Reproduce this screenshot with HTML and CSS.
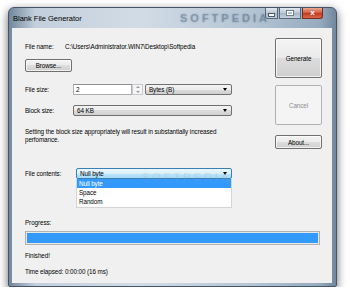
FILE: index.html
```html
<!DOCTYPE html>
<html lang="en">
<head>
    <meta charset="UTF-8">
    <title>Blank File Generator</title>
    <link rel="stylesheet" href="styles.css">
</head>
<body>
    <div class="window">
        <div class="titlebar">
            <span class="title">Blank File Generator</span>
            <span class="watermark">SOFTPEDIA</span>
            <div class="caption-buttons">
                <span class="cap cap-min"><i></i></span>
                <span class="cap cap-max"><i></i></span>
                <span class="cap cap-close">x</span>
            </div>
        </div>
        <div class="client">
            <div class="top">
                <div class="form">
                    <div class="row row-name">
                        <span class="label label-short">File name:</span>
                        <span class="path">C:\Users\Administrator.WIN7\Desktop\Softpedia</span>
                    </div>
                    <button class="btn btn-browse">Browse...</button>
                    <div class="row row-size">
                        <span class="label">File size:</span>
                        <div class="textbox">2</div>
                        <div class="spinner"><span class="up"></span><span class="down"></span></div>
                        <div class="combo combo-unit">Bytes (B)<span class="arrow"></span></div>
                    </div>
                    <div class="row row-block">
                        <span class="label">Block size:</span>
                        <div class="combo combo-wide">64 KB<span class="arrow"></span></div>
                    </div>
                    <p class="note">Setting the block size appropriately will result in substantially increased<br>perfomance.</p>
                    <div class="row row-contents">
                        <span class="label label-long">File contents:</span>
                        <div class="combo combo-focus">Null byte<span class="arrow"></span></div>
                    </div>
                </div>
                <div class="actions">
                    <button class="btn btn-big">Generate</button>
                    <button class="btn btn-big btn-disabled">Cancel</button>
                    <button class="btn btn-about">About...</button>
                </div>
            </div>
            <div class="bottom">
                <div class="line">Progress:</div>
                <div class="progress"><div class="progress-fill"></div></div>
                <div class="line line-finished">Finished!</div>
                <div class="line line-time">Time elapsed: 0:00:00 (16 ms)</div>
            </div>
            <ul class="dropdown">
                <li class="selected">Null byte</li>
                <li>Space</li>
                <li>Random</li>
            </ul>
            <span class="wm-mid">SOFTPEDIA</span>
        </div>
    </div>
</body>
</html>
```

FILE: styles.css
```css
* {
    box-sizing: border-box;
    margin: 0;
    padding: 0;
}
body {
    font-family: "Liberation Sans", Arial, sans-serif;
    font-size: 6.3px;
    letter-spacing: -0.08px;
    color: #000;
    background: #fff;
    padding: 7px 0 0 8px;
}
.window {
    width: 329px;
    height: 280px;
    border: 1px solid #44546a;
    border-radius: 6px 6px 2px 2px;
    padding: 0 4px 3px 3px;
    background: linear-gradient(to right, #72879c, #c3cfdc 8%, #d2dce6 40%, #b3c3d2 75%, #97abbf 95%, #72879c);
    box-shadow: 0 3px 10px rgba(0, 0, 0, 0.6);
}
.titlebar {
    height: 20px;
    display: flex;
    align-items: flex-start;
    position: relative;
}
.title {
    font-size: 7.5px;
    letter-spacing: 0;
    padding: 6px 0 0 1px;
    color: #000;
}
.watermark {
    position: absolute;
    left: 168px;
    top: 4px;
    font-size: 11px;
    font-weight: bold;
    letter-spacing: 3px;
    color: rgba(60, 85, 115, 0.3);
    text-shadow: 0 0 2px rgba(60, 85, 115, 0.4);
}
.caption-buttons {
    margin-left: auto;
    margin-right: 9px;
    display: flex;
    gap: 1px;
}
.cap {
    height: 11px;
    border: 1px solid #56677a;
    border-top: none;
    background: linear-gradient(#e2e8ef, #bac7d4 50%, #a5b5c5 50%, #c6d2dd);
    display: flex;
    align-items: center;
    justify-content: center;
}
.cap-min {
    width: 13px;
    border-radius: 0 0 0 3px;
}
.cap-min i {
    width: 5px;
    height: 2px;
    margin-top: 3px;
    background: #fff;
    border: 1px solid #4d5c6c;
    box-sizing: content-box;
}
.cap-max {
    width: 22px;
}
.cap-max i {
    width: 6px;
    height: 4px;
    border: 1px solid #fff;
    outline: 1px solid #6f7f90;
}
.cap-close {
    width: 21px;
    border-color: #7a2a1e;
    border-radius: 0 0 3px 0;
    background: linear-gradient(#eba995, #d0573f 50%, #c2351c 50%, #d86b4b);
    color: #fff;
    font-size: 8px;
    font-weight: bold;
    line-height: 1;
}
.client {
    position: relative;
    height: 255px;
    background: #f0f0f0;
}
.top {
    display: flex;
    padding-left: 13px;
    height: 151px;
}
.form {
    width: 207px;
}
.row {
    display: flex;
    align-items: center;
}
.label {
    width: 48px;
    flex-shrink: 0;
}
.label-short {
    width: 40px;
}
.label-long {
    width: 51px;
}
.row-name {
    margin-top: 13px;
    height: 10px;
}
.path {
    white-space: nowrap;
}
.btn {
    display: flex;
    align-items: center;
    justify-content: center;
    font-family: inherit;
    font-size: 6.3px;
    letter-spacing: -0.08px;
    color: #000;
    border: 1px solid #707070;
    border-radius: 2px;
    background: linear-gradient(#f3f3f3, #ebebeb 50%, #dddddd 50%, #cfcfcf);
    box-shadow: inset 0 0 0 1px rgba(255, 255, 255, 0.7);
}
.btn-browse {
    margin-top: 8px;
    width: 47px;
    height: 13px;
}
.row-size {
    margin-top: 12px;
    height: 11px;
}
.textbox {
    width: 59px;
    height: 11px;
    background: #fff;
    border: 1px solid #abadb3;
    border-top-color: #8e8f8f;
    padding-left: 2px;
    line-height: 9px;
}
.spinner {
    width: 11px;
    height: 11px;
    display: flex;
    flex-direction: column;
    border: 1px solid #c5c8cc;
    background: #f4f4f4;
}
.spinner span {
    flex: 1;
    display: flex;
    align-items: center;
    justify-content: center;
}
.spinner .up::after {
    content: "";
    border-left: 2px solid transparent;
    border-right: 2px solid transparent;
    border-bottom: 2px solid #9a9a9a;
}
.spinner .down::after {
    content: "";
    border-left: 2px solid transparent;
    border-right: 2px solid transparent;
    border-top: 2px solid #9a9a9a;
}
.combo {
    height: 11px;
    display: flex;
    align-items: center;
    justify-content: space-between;
    padding: 0 4px 0 3px;
    border: 1px solid #707070;
    border-radius: 2px;
    background: linear-gradient(#f3f3f3, #ebebeb 50%, #dddddd 50%, #cfcfcf);
}
.arrow {
    border-left: 2.5px solid transparent;
    border-right: 2.5px solid transparent;
    border-top: 3px solid #000;
}
.combo-unit {
    margin-left: 2px;
    width: 87px;
}
.row-block {
    margin-top: 10px;
    height: 11px;
}
.combo-wide {
    width: 159px;
}
.note {
    margin-top: 12px;
    line-height: 8px;
    white-space: nowrap;
}
.row-contents {
    margin-top: 24px;
    height: 11px;
}
.combo-focus {
    width: 156px;
    border-color: #3c7fb1;
    background: linear-gradient(#eaf6fd, #d9f0fc 50%, #bee6fd 50%, #a7d9f5);
}
.actions {
    margin-left: 43px;
    width: 47px;
    padding-top: 10px;
}
.btn-big {
    width: 47px;
    height: 40px;
    margin-bottom: 7px;
}
.btn-disabled {
    color: #8d8d8d;
    border-color: #adb2b5;
    background: #f4f4f4;
    box-shadow: none;
}
.btn-about {
    margin-top: 10px;
    width: 47px;
    height: 14px;
}
.bottom {
    padding: 0 12px 0 13px;
}
.line {
    height: 10px;
    line-height: 10px;
}
.bottom > .line:first-child {
    margin-top: 39px;
}
.progress {
    margin-top: 3px;
    height: 14px;
    border: 1px solid #b2b2b2;
    padding: 1px;
    background: #e8e8e8;
}
.progress-fill {
    height: 100%;
    background: #3399ff;
}
.line-finished {
    margin-top: 6px;
}
.line-time {
    margin-top: 6px;
}
.dropdown {
    list-style: none;
    position: absolute;
    left: 64px;
    top: 151px;
    width: 156px;
    height: 29px;
    background: #fff;
    border: 1px solid #d4d4d4;
    border-top: none;
}
.dropdown li {
    height: 9px;
    line-height: 9px;
    padding-left: 2px;
}
.dropdown li.selected {
    background: #3399ff;
    color: #fff;
}
.wm-mid {
    position: absolute;
    left: 130px;
    top: 143px;
    font-size: 11px;
    font-weight: bold;
    letter-spacing: 3px;
    color: rgba(160, 160, 160, 0.18);
}
```
